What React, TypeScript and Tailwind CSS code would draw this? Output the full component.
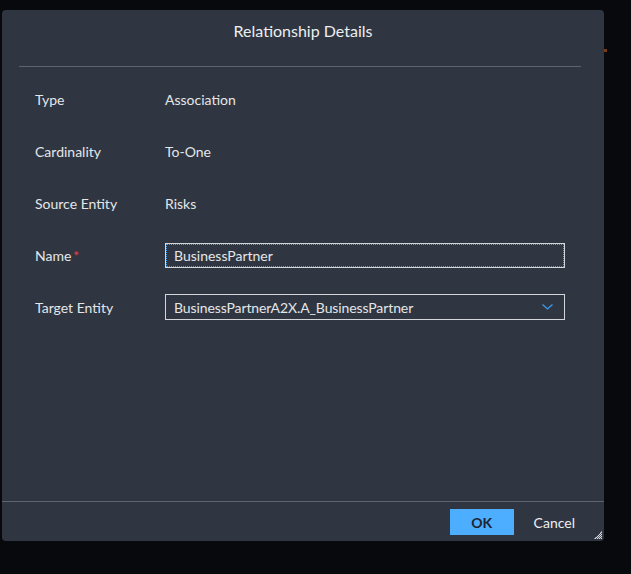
import React from 'react';

const rows = [
  { label: 'Type', value: 'Association' },
  { label: 'Cardinality', value: 'To-One' },
  { label: 'Source Entity', value: 'Risks' },
];

export default function App() {
  return (
    <div
      className="relative w-[631px] h-[574px] bg-[#07090c] pt-[10px] pl-[2px]"
      style={{ fontFamily: '"Segoe UI", Lato, "Noto Sans", sans-serif' }}
    >
      {/* stray marker behind the dialog */}
      <div className="absolute left-[604px] top-[49px] w-[3px] h-[3px] bg-[#7a3a12]" />

      <div className="relative w-[602px] h-[531px] bg-[#2f3641] rounded-[4px] flex flex-col text-[14px] text-[#e4e6e9]">
        <div className="h-[57px] ml-[17px] mr-[23px] border-b border-[#5d636c] flex justify-center pt-[11px] pl-[6px]">
          <span className="text-[16px] leading-5 text-[#eceef0]">Relationship Details</span>
        </div>

        <div className="flex-1 flex flex-col gap-[26px] px-[33px] pt-[19px]">
          {rows.map((r) => (
            <div key={r.label} className="flex items-center h-[26px]">
              <span className="w-[130px]">{r.label}</span>
              <span>{r.value}</span>
            </div>
          ))}

          <div className="flex items-center h-[26px]">
            <span className="w-[130px]">
              Name<span className="text-[#e2424c] ml-[2px]">*</span>
            </span>
            <div className="w-[400px] h-[25px] border border-[#d4d6d9] flex items-center pl-[8px] outline-1 outline-dotted outline-[#3d9df2] -outline-offset-[2px]">
              BusinessPartner
            </div>
          </div>

          <div className="flex items-center h-[26px]">
            <span className="w-[130px]">Target Entity</span>
            <div className="w-[400px] h-[26px] border border-[#d4d6d9] flex items-center justify-between pl-[8px] pr-[11px]">
              <span className="tracking-[-0.1px]">BusinessPartnerA2X.A_BusinessPartner</span>
              <svg width="11" height="6" viewBox="0 0 11 6" fill="none">
                <path d="M0.5 0.5L5.5 5L10.5 0.5" stroke="#3a9bef" strokeWidth="1.3" />
              </svg>
            </div>
          </div>
        </div>

        <div className="h-[40px] border-t border-[#5d636c] flex items-start justify-end pt-[7px] pr-[29px]">
          <button className="w-[64px] h-[26px] bg-[#4dadff] text-[#1c2430] font-bold text-[14px]">
            OK
          </button>
          <button className="ml-[20px] h-[26px] text-[#eceef0] text-[14px]">Cancel</button>
        </div>

        <svg className="absolute right-[2px] bottom-[2px]" width="8" height="8" viewBox="0 0 8 8">
          <path d="M8 0L8 8L0 8Z" fill="#d8dadd" />
          <path d="M6 2L2 6M8 2L2 8M8 4L4 8M8 6L6 8" stroke="#2f3641" strokeWidth="0.8" />
        </svg>
      </div>
    </div>
  );
}
